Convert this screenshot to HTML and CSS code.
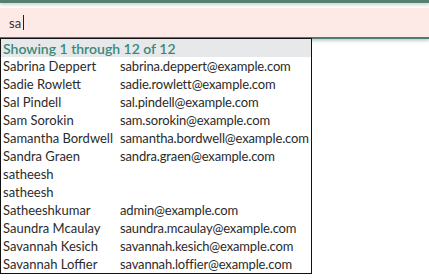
FILE: index.html
```html
<!DOCTYPE html>
<html lang="en">
<head>
  <meta charset="UTF-8" />
  <title>User search</title>
  <link rel="stylesheet" href="styles.css">
</head>
<body>

  <div class="topbar"></div>

  <div class="search">
    <div class="field">sa<span class="caret"></span></div>
  </div>

  <table class="results">
    <thead>
      <tr><th colspan="2">Showing 1 through 12 of 12</th></tr>
    </thead>
    <tbody>
      <tr><td>Sabrina Deppert</td><td>sabrina.deppert@example.com</td></tr>
      <tr><td>Sadie Rowlett</td><td>sadie.rowlett@example.com</td></tr>
      <tr><td>Sal Pindell</td><td>sal.pindell@example.com</td></tr>
      <tr><td>Sam Sorokin</td><td>sam.sorokin@example.com</td></tr>
      <tr><td>Samantha Bordwell</td><td>samantha.bordwell@example.com</td></tr>
      <tr><td>Sandra Graen</td><td>sandra.graen@example.com</td></tr>
      <tr><td>satheesh</td><td></td></tr>
      <tr><td>satheesh</td><td></td></tr>
      <tr><td>Satheeshkumar</td><td>admin@example.com</td></tr>
      <tr><td>Saundra Mcaulay</td><td>saundra.mcaulay@example.com</td></tr>
      <tr><td>Savannah Kesich</td><td>savannah.kesich@example.com</td></tr>
      <tr><td>Savannah Loffier</td><td>savannah.loffier@example.com</td></tr>
    </tbody>
  </table>

</body>
</html>
```

FILE: styles.css
```css
body {
  margin: 0;
  font-family: Lato, "Liberation Sans", sans-serif;
  font-size: 13px;
  color: #2b2b2b;
  background: #fff;
}
.topbar {
  height: 3px;
  background: #577f70;
  box-shadow: 0 2px 3px rgba(87, 127, 112, 0.35);
}
.search {
  margin-top: 5px;
  border-bottom: 2px solid #4c7d6d;
  box-shadow: 0 2px 3px rgba(76, 125, 109, 0.35);
}
.field {
  display: flex;
  align-items: center;
  height: 29px;
  background: #fde9e5;
  padding: 0 9px;
  font-size: 13px;
  color: #333;
}
.caret {
  display: inline-block;
  width: 1px;
  height: 15px;
  margin-left: 2px;
  background: #222;
}
.results {
  position: relative;
  border-collapse: collapse;
  border: 1px solid #111;
  background: #fff;
  margin-top: -1px;
}
.results th {
  background: #e6e8ea;
  color: #3a887a;
  font-size: 14px;
  font-weight: 600;
  text-align: left;
  padding: 0 2px;
  height: 18px;
}
.results td {
  padding: 0 2px;
  height: 18px;
  white-space: nowrap;
}
.results td:first-child {
  padding-right: 5px;
}
.results td + td {
  letter-spacing: -0.15px;
}
```
